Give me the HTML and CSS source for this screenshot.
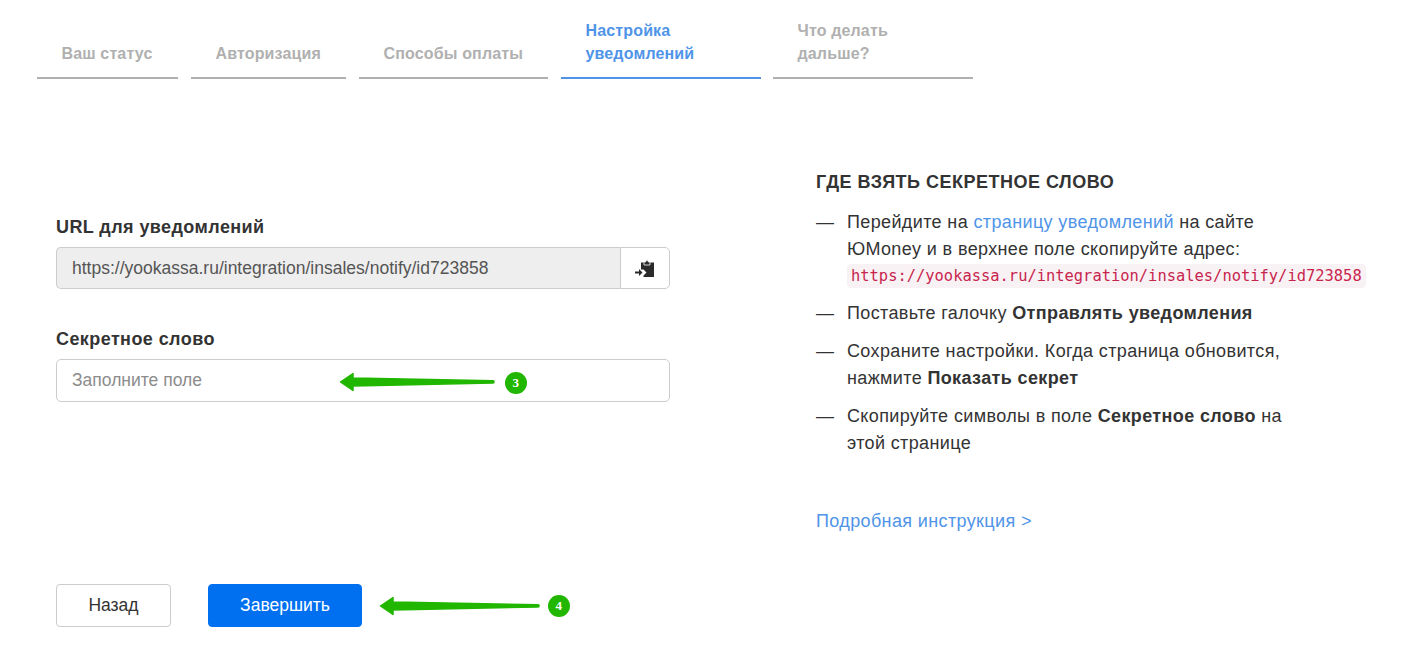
FILE: index.html
```html
<!DOCTYPE html>
<html lang="ru">
<head>
  <meta charset="UTF-8" />
  <title>Настройка уведомлений</title>
  <link rel="stylesheet" href="styles.css">
</head>
<body>
  <nav class="steps">
    <a class="step step-1">Ваш статус</a>
    <a class="step step-2">Авторизация</a>
    <a class="step step-3">Способы оплаты</a>
    <a class="step step-4 active">Настройка<br>уведомлений</a>
    <a class="step step-5">Что делать<br>дальше?</a>
  </nav>

  <main class="content">
    <section class="form-col">
      <form class="form">
        <label class="field-label">URL для уведомлений</label>
        <div class="input-group">
          <input class="input input-readonly" type="text" readonly value="https://yookassa.ru/integration/insales/notify/id723858" />
          <button type="button" class="copy-btn" aria-label="Скопировать">
            <svg width="20" height="19" viewBox="0 0 20 19">
              <path fill="#2b2b2b" d="M6 3.500H19V18H8.500V16.500L11.500 13.500 8.500 10.500H6z"/>
              <path fill="#2b2b2b" stroke="#fff" stroke-width="0.800" d="M9 6V3H10.500L12 0.500 13.500 3H15V6z"/>
              <path fill="#2b2b2b" d="M0 12.500H4V10L7.500 13.500 4 17V14.500H0z"/>
            </svg>
          </button>
        </div>

        <label class="field-label label-secret">Секретное слово</label>
        <input class="input" type="text" placeholder="Заполните поле" />
      </form>

      <div class="actions">
        <button type="button" class="btn btn-back">Назад</button>
        <button type="button" class="btn btn-finish">Завершить</button>
      </div>
    </section>

    <aside class="help">
      <h2 class="help-title">ГДЕ ВЗЯТЬ СЕКРЕТНОЕ СЛОВО</h2>
      <ul class="help-list">
        <li class="item-first">Перейдите на <a class="link">страницу уведомлений</a> на сайте ЮMoney и в верхнее поле скопируйте адрес: <code>https://yookassa.ru/integration/insales/notify/id723858</code></li>
        <li>Поставьте галочку <b>Отправлять уведомления</b></li>
        <li>Сохраните настройки. Когда страница обновится, нажмите <b>Показать секрет</b></li>
        <li>Скопируйте символы в поле <b>Секретное слово</b> на этой странице</li>
      </ul>
      <a class="link help-more">Подробная инструкция &gt;</a>
    </aside>
  </main>

  <!-- green annotation arrows over the form -->
  <div class="note note-3">
    <svg width="158" height="22" viewBox="0 0 158 22">
      <path fill="#21b700" stroke="#21b700" stroke-width="1.500" stroke-linejoin="round" d="M2.500 11 15 2.500V7L155 9.700a1.100 1.100 0 0 1 0 2.200L15 15V19.500z"/>
    </svg>
    <span class="badge">3</span>
  </div>
  <div class="note note-4">
    <svg width="163" height="22" viewBox="0 0 163 22">
      <path fill="#21b700" stroke="#21b700" stroke-width="1.500" stroke-linejoin="round" d="M2.500 11 15 2.500V7L160 9.700a1.100 1.100 0 0 1 0 2.200L15 15V19.500z"/>
    </svg>
    <span class="badge">4</span>
  </div>
</body>
</html>
```

FILE: styles.css
```css
html, body {
  height: 100%;
}

body {
  margin: 0;
  overflow: hidden;
  position: relative;
  background: #fff;
  color: #333;
  font-family: 'Liberation Sans', Arial, sans-serif;
  font-size: 18px;
  letter-spacing: 0.37px;
}

.steps {
  display: flex;
  align-items: flex-end;
  margin-left: 37px;
  padding-top: 19px;
}

.step {
  box-sizing: border-box;
  height: 60px;
  padding: 0 10px 12px 24.500px;
  margin-right: 13px;
  display: flex;
  align-items: flex-end;
  border-bottom: 2px solid #b0b0b0;
  color: #b0b0b0;
  font-size: 16px;
  font-weight: bold;
  line-height: 23px;
  letter-spacing: 0.15px;
}

.step-1 { width: 141px; }
.step-2 { width: 155px; }
.step-3 { width: 189px; }
.step-4 { width: 200px; margin-right: 12px; }
.step-5 { width: 200px; margin-right: 0; }

.step.active {
  color: #4f94e8;
  border-bottom-color: #4f94e8;
}

.content {
  display: flex;
  padding: 90px 0 0 56px;
}

.form-col {
  width: 614px;
  margin-right: 146px;
}

.form {
  padding-top: 48px;
  height: 367px;
}

.field-label {
  display: block;
  margin-bottom: 9px;
  font-size: 18px;
  font-weight: bold;
  line-height: 21px;
  letter-spacing: 0.42px;
  color: #333;
}

.label-secret {
  margin-top: 40px;
}

.input {
  display: block;
  box-sizing: border-box;
  width: 100%;
  height: 43px;
  padding: 0 15px;
  border: 1px solid #ccc;
  border-radius: 5px;
  background: #fff;
  color: #555;
  font-family: inherit;
  font-size: 17.5px;
}

.input::placeholder {
  color: #8c8c8c;
  opacity: 1;
}

.input:focus {
  outline: none;
}

.input-group {
  display: flex;
}

.input-readonly {
  flex: 1;
  min-width: 0;
  height: 42px;
  background: #eee;
  border-radius: 5px 0 0 5px;
  border-right: none;
}

.copy-btn {
  display: flex;
  align-items: center;
  justify-content: center;
  width: 50px;
  height: 42px;
  padding: 0;
  border: 1px solid #ccc;
  border-radius: 0 5px 5px 0;
  background: #fff;
}

.actions {
  display: flex;
  gap: 37px;
}

.btn {
  box-sizing: border-box;
  height: 43px;
  border-radius: 4px;
  font-family: inherit;
  font-size: 17.5px;
}

.btn-back {
  width: 115px;
  border: 1px solid #ccc;
  background: #fff;
  color: #333;
}

.btn-finish {
  width: 154px;
  border: 1px solid #0070f0;
  background: #0070f0;
  color: #fff;
}

.help {
  width: 560px;
}

.help-title {
  margin: 0 0 14px;
  font-size: 18px;
  font-weight: bold;
  line-height: 26px;
  letter-spacing: 0.5px;
  color: #333;
}

.help-list {
  list-style: none;
  margin: 0 0 55px;
  padding: 0;
}

.help-list li {
  position: relative;
  width: 450px;
  padding-left: 31px;
  margin-bottom: 12px;
  line-height: 26.500px;
}

.help-list .item-first {
  margin-bottom: 10px;
}

.help-list li::before {
  content: "—";
  position: absolute;
  left: 0;
  top: 0;
}

.help-list b {
  color: #333;
}

.link {
  color: #4f94e8;
  text-decoration: none;
}

.help-list code {
  padding: 3px 4px;
  border-radius: 4px;
  background: #f9f2f4;
  color: #c7254e;
  font-family: 'DejaVu Sans Mono', monospace;
  font-size: 15.430px;
  letter-spacing: 0;
  white-space: nowrap;
}

.help-more {
  font-size: 18px;
}

.note {
  position: absolute;
  display: flex;
  align-items: center;
}

.note-3 {
  left: 338px;
  top: 370px;
  gap: 9px;
}

.note-3 .badge {
  margin-top: 2px;
}

.note-4 {
  left: 378px;
  top: 595px;
  gap: 7px;
}

.badge {
  width: 22px;
  height: 22px;
  border-radius: 50%;
  background: #21b700;
  color: #fff;
  font-family: 'Liberation Serif', serif;
  font-size: 13px;
  font-weight: bold;
  line-height: 22px;
  text-align: center;
}
```
